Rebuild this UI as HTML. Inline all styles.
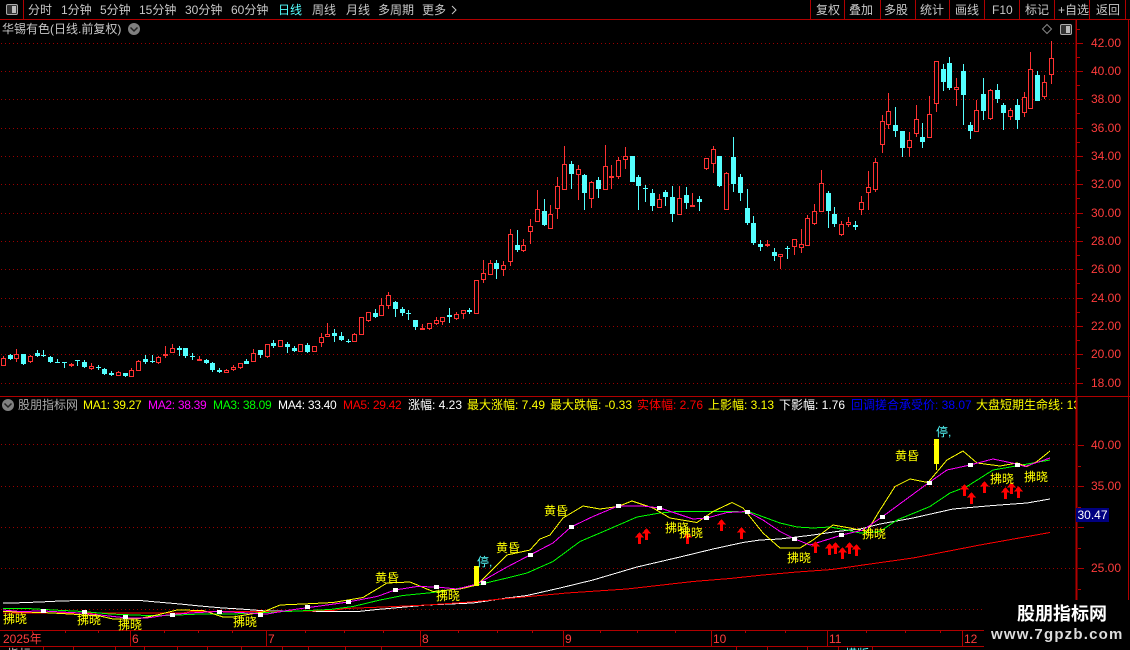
<!DOCTYPE html>
<html><head><meta charset="utf-8"><style>
html,body{margin:0;padding:0;background:#000;width:1130px;height:650px;overflow:hidden}
#r{position:relative;width:1130px;height:650px;overflow:hidden;background:#000;font:12px/14px "Liberation Sans","WenQuanYi Zen Hei","Noto Sans CJK SC",sans-serif;color:#c8c8c8}
#r span{position:absolute;white-space:pre}
svg{position:absolute;left:0;top:0}
.a{color:#ff3c3c}.y{color:#ff0}.m{color:#f0f}.g{color:#0f0}.w{color:#fff}.d{color:#f00}.b{color:#00f}
.t{letter-spacing:-.3px}
</style></head><body><div id="r">
<svg id="s" width="1130" height="650" shape-rendering="crispEdges"></svg>

<span style="left:28px;top:3px">分时</span><span style="left:61px;top:3px">1分钟</span><span style="left:100px;top:3px">5分钟</span><span style="left:139px;top:3px">15分钟</span><span style="left:185px;top:3px">30分钟</span><span style="left:231px;top:3px">60分钟</span><span style="left:278px;top:3px;color:#55ffff">日线</span><span style="left:312px;top:3px">周线</span><span style="left:346px;top:3px">月线</span><span style="left:378px;top:3px">多周期</span><span style="left:422px;top:3px">更多</span>
<span style="left:816px;top:3px">复权</span><span style="left:849px;top:3px">叠加</span><span style="left:884px;top:3px">多股</span><span style="left:920px;top:3px">统计</span><span style="left:955px;top:3px">画线</span><span style="left:992px;top:3px">F10</span><span style="left:1025px;top:3px">标记</span><span style="left:1058px;top:3px">+自选</span><span style="left:1096px;top:3px">返回</span>
<span style="left:2px;top:22px">华锡有色(日线.前复权)</span>

<span class="a" style="left:1091px;top:36px">42.00</span><span class="a" style="left:1091px;top:64px">40.00</span><span class="a" style="left:1091px;top:92px">38.00</span><span class="a" style="left:1091px;top:121px">36.00</span><span class="a" style="left:1091px;top:149px">34.00</span><span class="a" style="left:1091px;top:177px">32.00</span><span class="a" style="left:1091px;top:206px">30.00</span><span class="a" style="left:1091px;top:234px">28.00</span><span class="a" style="left:1091px;top:262px">26.00</span><span class="a" style="left:1091px;top:291px">24.00</span><span class="a" style="left:1091px;top:319px">22.00</span><span class="a" style="left:1091px;top:347px">20.00</span><span class="a" style="left:1091px;top:376px">18.00</span>

<span style="left:18px;top:398px;color:#aaa">股朋指标网</span>
<span class="y t" style="left:83px;top:398px">MA1: 39.27</span><span class="m t" style="left:148px;top:398px">MA2: 38.39</span><span class="g t" style="left:213px;top:398px">MA3: 38.09</span><span class="w t" style="left:278px;top:398px">MA4: 33.40</span><span class="d t" style="left:343px;top:398px">MA5: 29.42</span><span class="w" style="left:408px;top:398px">涨幅: 4.23</span><span class="y" style="left:467px;top:398px">最大涨幅: 7.49</span><span class="y" style="left:550px;top:398px">最大跌幅: -0.33</span><span class="d" style="left:637px;top:398px">实体幅: 2.76</span><span class="y" style="left:708px;top:398px">上影幅: 3.13</span><span class="w" style="left:779px;top:398px">下影幅: 1.76</span><span class="b" style="left:851px;top:398px">回调搓合承受价: 38.07</span>
<span style="left:976px;top:398px;width:100px;height:14px;overflow:hidden;color:#ff0">大盘短期生命线: 13.5</span>

<span class="a" style="left:1091px;top:438px">40.00</span><span class="a" style="left:1091px;top:479px">35.00</span><span class="a" style="left:1091px;top:561px">25.00</span>
<span style="left:1076px;top:508px;width:33px;height:14px;background:#000080;color:#fff;text-align:center">30.47</span>

<span class="y" style="left:3px;top:612px">拂晓</span><span class="y" style="left:77px;top:613px">拂晓</span><span class="y" style="left:118px;top:618px">拂晓</span><span class="y" style="left:233px;top:615px">拂晓</span><span class="y" style="left:436px;top:589px">拂晓</span><span class="y" style="left:665px;top:521px">拂晓</span><span class="y" style="left:679px;top:526px">拂晓</span><span class="y" style="left:787px;top:551px">拂晓</span><span class="y" style="left:862px;top:527px">拂晓</span><span class="y" style="left:990px;top:472px">拂晓</span><span class="y" style="left:1024px;top:470px">拂晓</span>
<span class="y" style="left:375px;top:571px">黄昏</span><span class="y" style="left:496px;top:541px">黄昏</span><span class="y" style="left:544px;top:504px">黄昏</span><span class="y" style="left:895px;top:449px">黄昏</span>
<span style="left:477px;top:555px;color:#55ffff">停,</span><span style="left:936px;top:425px;color:#55ffff">停,</span>

<span class="a" style="left:3px;top:632px">2025年</span><span class="a" style="left:132px;top:632px">6</span><span class="a" style="left:268px;top:632px">7</span><span class="a" style="left:422px;top:632px">8</span><span class="a" style="left:565px;top:632px">9</span><span class="a" style="left:713px;top:632px">10</span><span class="a" style="left:829px;top:632px">11</span><span class="a" style="left:964px;top:632px">12</span>

<span style="left:7px;top:647px;color:#ccc">指标</span><span style="left:845px;top:647px;color:#55ffff">模版</span>

<div style="position:absolute;left:984px;top:600px;width:146px;height:50px;background:#000"></div>
<span style="left:1017px;top:603px;font-size:18px;line-height:22px;font-weight:bold;color:#fff">股朋指标网</span>
<span style="left:991px;top:626px;font-size:15px;line-height:18px;font-weight:bold;letter-spacing:1.2px;color:#ddd">www.7gpzb.com</span>
</div>
<script>
var C=[
"r356,358,366,366","c354,355,359,360","r349,354,359,362","c354,354,364,365","r355,356,362,363","c350,353,356,357","c350,355,356,357","c356,357,362,363","c359,362,363,363","c362,362,363,368","r363,364,365,367","c360,360,361,366","c360,362,367,368","r363,366,369,370","c365,367,368,370","c368,369,374,375","c371,373,375,376","r371,372,376,376","c373,373,376,377","r368,370,377,377","r360,361,371,371","c355,359,362,364","c355,361,362,363","r356,357,363,364","r346,354,355,358","r344,348,353,353","c346,348,350,356","c348,348,356,358","c353,356,357,360","r356,359,361,361","c359,360,363,364","c362,363,370,372","c368,370,372,373","r369,370,373,373","r365,367,370,371","r363,363,368,369","c359,361,364,364","r349,353,362,362","c350,350,355,358","r344,344,357,358","c340,343,346,348","r340,340,347,347","c342,344,347,353","c346,348,351,352","r344,344,352,352",
"c343,345,352,353","r346,346,352,352","r333,337,343,347","r323,334,337,337","c329,333,336,342","c332,336,340,341","c339,341,341,343","r333,334,342,342","r317,317,335,335","r312,312,321,322","c309,313,317,318","r298,305,316,316","r292,295,306,309","c301,302,309,317","c307,309,313,316","c310,313,314,320","c320,320,327,330","r324,328,330,330","r323,323,329,330","r317,320,324,325","r317,317,322,325","c308,315,317,323","r312,314,319,320","r310,310,314,319","c308,310,312,314","r280,280,314,314","r260,273,280,283","r260,263,275,275","c260,263,269,279","r261,265,270,276","r229,234,262,266","c230,245,250,252","r239,245,251,252","r219,226,232,244","r190,209,222,222","c199,211,225,226","r205,214,229,229","r177,186,209,219","r146,164,190,190","c161,164,174,189","r165,169,175,200","c174,175,193,210","r181,182,199,208","c177,180,189,198",
"r145,166,190,190","r165,176,177,189","r157,160,177,179","r147,156,160,169","c156,156,182,182","c175,177,186,210","c185,188,189,202","c189,193,206,211","r194,199,208,208","c190,192,197,206","c186,197,214,222","r186,198,215,215","c187,195,203,209","r193,205,206,207","c196,199,202,211","r158,158,169,170","r146,149,164,173","c156,156,186,187","r172,173,210,210","c137,157,184,192","c174,177,193,201","c189,208,223,225","c216,223,243,245","c240,244,247,251","r240,244,245,247","c248,252,256,261","r254,254,257,269","c246,248,249,259","r239,239,247,255","r229,244,248,253","r215,218,246,246","r204,211,224,225","r170,183,212,212","c191,193,211,228","c207,214,224,227","r221,224,235,236","r217,222,225,227","c221,225,227,230","r196,202,210,215","r171,187,193,210",
"r158,162,190,192","r115,121,145,153","r93,111,125,129","c107,125,131,137","c131,131,148,157","r132,140,148,157","r105,119,134,137","c123,137,142,148","r96,114,138,138","r61,61,104,112","c64,69,82,91","c57,63,88,90","r78,87,90,106","c64,71,95,125","c122,125,131,139","r100,110,132,132","c78,94,111,120","r89,90,119,120","c84,90,99,103","c103,105,113,130","r108,110,117,120","c99,105,120,129","r92,97,113,117","r52,69,109,109","c71,75,101,101","r75,82,97,99","r41,58,75,84"];
var h='',DR='#b00000',i;
function L(x1,y1,x2,y2,c,w){return '<line x1="'+x1+'" y1="'+y1+'" x2="'+x2+'" y2="'+y2+'" stroke="'+c+'"'+(w?' stroke-width="'+w+'"':'')+'/>'}
// dotted grids
[43,71,99,128,156,184,213,241,269,298,326,354,383,444,486,527,568,609].forEach(function(y){
 h+='<line x1="1" y1="'+(y+.5)+'" x2="1075" y2="'+(y+.5)+'" stroke="#9a0000" stroke-dasharray="1 3"/>';
});
// frame
h+=L(0,19.5,1130,19.5,DR)+L(0,396.5,1130,396.5,DR)+L(0,630.5,1130,630.5,DR)+L(0,646.5,1130,646.5,DR);
h+=L(23.5,0,23.5,19,DR);
[810,844,880,915,949,984,1019,1054,1089,1125].forEach(function(x){h+=L(x+.5,0,x+.5,19,DR)});
h+=L(1076,20,1076,396,DR,1.5)+L(1076.5,397,1076.5,630,DR,2)+L(1128.5,397,1128.5,630,DR);
h+=L(1128.5,20,1128.5,396,DR);
[130,266,420,563,711,827,962].forEach(function(x){h+=L(x+.5,631,x+.5,646,DR)});
[32,65,98,164,198,232,305,344,383,458,497,532,600,637,675,745,785,866,905,940,1000,1040].forEach(function(x){h+=L(x+.5,631,x+.5,633,DR)});
[43,73,115,144,177,207,241,282,308,345,381,736,767,807,838,872].forEach(function(x){h+=L(x+.5,647,x+.5,650,DR)});
// y ticks
for(i=0;i<13;i++){var ty=[43,71,99,128,156,184,213,241,269,298,326,354,383][i];h+=L(1077,ty+.5,1083,ty+.5,DR);if(i<12)h+=L(1077,ty+14.5,1080,ty+14.5,DR);}
h+=L(1077,29.5,1080,29.5,DR);
[445,486,527,568].forEach(function(y){h+=L(1078,y+.5,1084,y+.5,DR);h+=L(1078,y+21.5,1081,y+21.5,DR)});
// candles
C.forEach(function(s,i){
 var t=s[0],v=s.slice(1).split(',').map(Number),x=Math.floor(3.4+6.76*i),c=t=='r'?'#ff3232':'#54ffff';
 h+=L(x+.5,v[0],x+.5,v[1],c)+L(x+.5,v[2],x+.5,v[3],c);
 if(t=='r'){
  var H=v[2]-v[1];
  if(H<=2)h+='<rect x="'+(x-2)+'" y="'+v[1]+'" width="5" height="2" fill="'+c+'"/>';
  else h+='<rect x="'+(x-1.5)+'" y="'+(v[1]+.5)+'" width="4" height="'+(H-1)+'" fill="#000" stroke="'+c+'"/>';
 }else{
  var H=Math.max(v[2]-v[1],1);
  h+='<rect x="'+(x-2)+'" y="'+v[1]+'" width="5" height="'+H+'" fill="'+c+'"/>';
 }
});
// MA lines
var Wh="3,603 13,603 40,602 60,601 80,600.5 140,600.5 157,602 180,604 200,606 223,608 240,609 266,611 358,611.5 377,609.5 427,605 473,603 507,598 527,595.5 560,588 593,580 637,567 680,557 713,549 743,542.5 760,540 780,539 813,535 837,531.5 860,529 880,524 913,518 953,509 993,505.5 1027,503 1050,499";
var Rd="3,613 183,613 190,611.5 266,611.5 333,610.5 345,608.5 383,607 427,605 470,602 507,598.5 567,593 627,589 693,581.5 730,578.5 763,575 797,572 832,569.5 863,565 913,558 980,545 1050,532.5";
var Gr="3,608.5 27,608.5 53,610 83,611.5 110,614 147,615.5 167,615.5 200,614 233,614 263,612.5 287,611.5 330,609.5 353,606.5 380,600 403,595.5 433,592.5 473,586 507,578 527,573 553,561.5 580,541.5 607,530 637,517 660,513 677,511.5 727,511.5 750,512 780,523 797,527 813,528 830,527 847,530 860,533 880,531.5 897,520 930,506.5 950,493 967,486.5 993,470 1013,466.5 1033,463 1050,460";
var Mg="3,610 20,611.5 43,611 80,613 100,615 127,618 147,618 167,615 190,613 217,611.5 240,612.5 267,614 287,610.5 327,605 348,602 377,596.5 395,590 417,586.5 437,587 457,589 477,584 507,567 530,555 553,543 571,527 593,516.5 618,506 643,506 660,508 693,519 707,518 727,512.5 747,511.5 763,520 780,531.5 795,539 810,545 842,535 863,530 882,517 929,482.5 947,470 970,465 993,459 1017,464 1025,466.5 1050,458";
var Yl="3,611.5 20,612 43,612.5 70,614 100,616 113,619 137,619 157,615 177,610 203,610.5 223,617 233,617 263,612 280,605 303,604 333,602.5 363,597.5 387,583 410,582 433,591.5 460,589 477,585 507,555 530,550 540,539 550,535 563,518 583,506 600,509 618,506.5 632,501 653,508 670,518 697,522.5 713,511.5 732,502.5 743,508 763,533 780,548 800,548 813,540 833,525 850,528 867,531.5 880,510 895,486.5 910,479 928,482.5 947,460 963,451 977,463 1000,466 1017,463 1027,466.5 1037,461.5 1050,451";
[[Wh,'#fff'],[Rd,'#f00'],[Gr,'#0f0'],[Yl,'#ff0'],[Mg,'#f0f']].forEach(function(a){h+='<polyline fill="none" stroke="'+a[1]+'" points="'+a[0]+'"/>'});
// markers
"43,611 84,612 125,617 172,615 219,612 260,615 307,607 348,602 395,590 436,587 483,583 530,555 571,527 618,506 659,508 706,518 747,512 794,539 841,535 882,517 929,483 970,465 1017,465".split(' ').forEach(function(p){var q=p.split(',');h+='<rect x="'+(q[0]-2)+'" y="'+(q[1]-2)+'" width="5" height="4" fill="#fff"/>'});
// bars
h+='<rect x="474" y="566" width="5" height="20" fill="#ff0"/><rect x="934" y="439" width="5" height="25" fill="#ff0"/>'+L(936.5,464,936.5,470,'#ff0');
// arrows
"639,532 646,528 687,532 721,519 741,527 815,541 829,543 835,542 842,547 849,542 856,544 964,484 971,492 984,481 1005,487 1011,482 1018,486".split(' ').forEach(function(p){var q=p.split(','),x=+q[0],y=+q[1];
 h+='<path d="M'+(x+.5)+' '+y+'L'+(x+5)+' '+(y+5.5)+'H'+(x+2)+'V'+(y+12)+'H'+(x-1)+'V'+(y+5.5)+'H'+(x-4)+'Z" fill="#f00"/>';
});
// icons
h+='<g shape-rendering="geometricPrecision">';
h+='<rect x="6.5" y="4.5" width="11" height="10" rx="1.5" fill="#333" stroke="#aaa"/><rect x="12" y="6" width="4" height="7" fill="#bbb"/>';
h+='<rect x="1060.5" y="24.5" width="11" height="10" rx="1.5" fill="#333" stroke="#aaa"/><rect x="1066" y="26" width="4" height="7" fill="#bbb"/>';
h+='<path d="M1047 24.5l4.5 4.5-4.5 4.5-4.5-4.5z" fill="none" stroke="#888"/>';
h+='<path d="M452 6l4 4-4 4" fill="none" stroke="#c8c8c8"/>';
h+='<circle cx="134" cy="29" r="6" fill="#808080"/><path d="M130.5 27.5l3.5 3.5 3.5-3.5" fill="none" stroke="#222" stroke-width="1.5"/>';
h+='<circle cx="8" cy="405" r="6" fill="#808080"/><path d="M4.5 403.5l3.5 3.5 3.5-3.5" fill="none" stroke="#222" stroke-width="1.5"/>';
h+='</g>';
document.getElementById('s').innerHTML=h;
</script>
</body></html>
